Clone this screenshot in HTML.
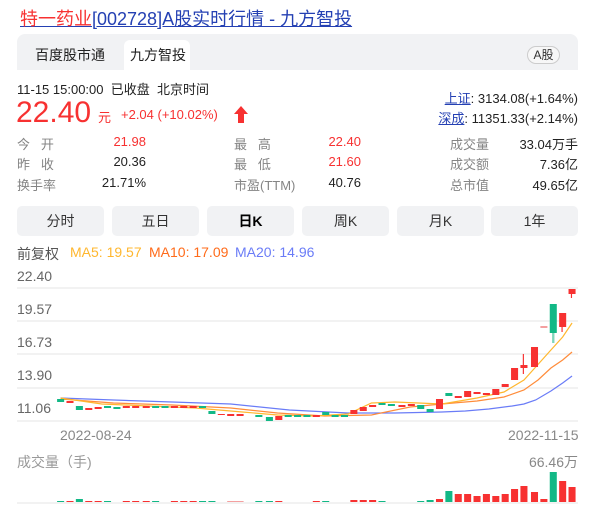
<!DOCTYPE html>
<html><head><meta charset="utf-8"><style>
*{margin:0;padding:0;box-sizing:border-box}
body{width:610px;height:512px;background:#fff;font-family:"Liberation Sans","Noto Sans CJK SC",sans-serif;position:relative;overflow:hidden;color:#333}
.a{position:absolute;white-space:nowrap}
.title{left:20px;top:5px;font-size:18px;color:#2440b3;text-decoration:underline}
.title span{color:#f73131}
.tabs{left:17px;top:34px;width:561px;height:36px;background:#f1f2f4;border-radius:8px 8px 0 0}
.tab{top:40px;height:30px;font-size:14px;line-height:30px;color:#222}
.btn{top:206px;height:30px;width:87px;background:#f1f2f4;border-radius:5px;font-size:14px;line-height:30px;text-align:center;color:#333}
.lbl{font-size:13px;color:#858585}
.val{font-size:13px;color:#222}
.red{color:#f73131}
.ax{font-size:13px;color:#666}
</style></head><body>
<div class="a title"><span>特一药业</span>[002728]A股实时行情 - 九方智投</div>
<div class="a tabs"></div>
<div class="a tab" style="left:35px">百度股市通</div>
<div class="a" style="left:124px;top:40px;width:66px;height:30px;background:#fff;border-radius:6px 6px 0 0"></div>
<div class="a tab" style="left:130px">九方智投</div>
<div class="a" style="left:527px;top:46px;width:33px;height:18px;border:1px solid #ccc;border-radius:9px;font-size:12px;line-height:16px;text-align:center;color:#333;background:#f7f7f7">A股</div>

<div class="a" style="left:17px;top:79px;font-size:13px;color:#222">11-15 15:00:00 &nbsp;已收盘 &nbsp;北京时间</div>
<div class="a red" style="left:16px;top:98px;font-size:30px;line-height:30px">22.40</div>
<div class="a red" style="left:98px;top:107px;font-size:13px">元</div>
<div class="a red" style="left:121px;top:107px;font-size:13px">+2.04 (+10.02%)</div>
<svg class="a" style="left:234px;top:106px" width="14" height="17" viewBox="0 0 14 17"><path d="M7 0L14 8H10V17H4V8H0Z" fill="#f73131"/></svg>
<div class="a" style="right:32px;top:88px;font-size:13px;color:#222"><u style="color:#2440b3">上证</u>: 3134.08(+1.64%)</div>
<div class="a" style="right:32px;top:108px;font-size:13px;color:#222"><u style="color:#2440b3">深成</u>: 11351.33(+2.14%)</div>

<div class="a lbl" style="left:17px;top:134px">今 &nbsp;&nbsp;开</div><div class="a val red" style="right:464px;top:134px">21.98</div>
<div class="a lbl" style="left:17px;top:154px">昨 &nbsp;&nbsp;收</div><div class="a val" style="right:464px;top:154px">20.36</div>
<div class="a lbl" style="left:17px;top:175px">换手率</div><div class="a val" style="right:464px;top:175px">21.71%</div>
<div class="a lbl" style="left:234px;top:134px">最 &nbsp;&nbsp;高</div><div class="a val red" style="right:249px;top:134px">22.40</div>
<div class="a lbl" style="left:234px;top:154px">最 &nbsp;&nbsp;低</div><div class="a val red" style="right:249px;top:154px">21.60</div>
<div class="a lbl" style="left:234px;top:175px">市盈(TTM)</div><div class="a val" style="right:249px;top:175px">40.76</div>
<div class="a lbl" style="left:450px;top:134px">成交量</div><div class="a val" style="right:32px;top:134px">33.04万手</div>
<div class="a lbl" style="left:450px;top:154px">成交额</div><div class="a val" style="right:32px;top:154px">7.36亿</div>
<div class="a lbl" style="left:450px;top:175px">总市值</div><div class="a val" style="right:32px;top:175px">49.65亿</div>

<div class="a btn" style="left:17px">分时</div>
<div class="a btn" style="left:112px">五日</div>
<div class="a btn" style="left:207px;color:#000;font-weight:bold">日K</div>
<div class="a btn" style="left:302px">周K</div>
<div class="a btn" style="left:397px">月K</div>
<div class="a btn" style="left:491px">1年</div>

<div class="a" style="left:17px;top:244px;font-size:14px;color:#555">前复权</div>
<div class="a" style="left:70px;top:244px;font-size:14px;color:#ffb72e">MA5: 19.57</div>
<div class="a" style="left:149px;top:244px;font-size:14px;color:#ff6b1a">MA10: 17.09</div>
<div class="a" style="left:235px;top:244px;font-size:14px;color:#6a7cf7">MA20: 14.96</div>

<div class="a ax" style="left:17px;top:268px;font-size:14px">22.40</div>
<div class="a ax" style="left:17px;top:301px;font-size:14px">19.57</div>
<div class="a ax" style="left:17px;top:334px;font-size:14px">16.73</div>
<div class="a ax" style="left:17px;top:367px;font-size:14px">13.90</div>
<div class="a ax" style="left:17px;top:400px;font-size:14px">11.06</div>
<div class="a ax" style="left:60px;top:427px;color:#888;font-size:14px">2022-08-24</div>
<div class="a ax" style="left:508px;top:427px;color:#888;font-size:14px">2022-11-15</div>
<div class="a ax" style="left:17px;top:452px;color:#999;font-size:14px">成交量（手)</div>
<div class="a ax" style="right:32px;top:452px;color:#888;font-size:14px">66.46万</div>

<svg class="a" style="left:0;top:0" width="610" height="512">
<g stroke="#eeeeee" stroke-width="1.5">
<line x1="17" x2="578" y1="288" y2="288"/><line x1="17" x2="578" y1="321" y2="321"/><line x1="17" x2="578" y1="354" y2="354"/><line x1="17" x2="578" y1="388" y2="388"/><line x1="17" x2="578" y1="421" y2="421"/><line x1="17" x2="578" y1="503" y2="503"/>
</g>
<g transform="translate(-3.9,0) scale(1.173,1)">
<polyline fill="none" stroke="#6a7cf7" stroke-width="1.2" vector-effect="non-scaling-stroke" points="55,398 100,400 150,402 200,404 250,410 300,413 340,413 380,412 400,411 420,409 440,406 450,404 460,400 473,391 483,383 491,376"/>
<polyline fill="none" stroke="#ff8c3a" stroke-width="1.2" vector-effect="non-scaling-stroke" points="55,399 100,403 150,405 200,408 240,413 280,416 320,415 353,407 380,404 410,401 433,397 450,390 462,380 473,368 483,360 491,352"/>
<polyline fill="none" stroke="#ffb72e" stroke-width="1.2" vector-effect="non-scaling-stroke" points="55,398 90,404 130,406 170,408 210,412 240,415 270,416 300,414 320,403 340,402 380,404 410,398 433,392 450,380 460,367 473,350 483,337 491,323"/>
<g fill="#f73131">
<rect x="60" y="401" width="6" height="2"/><rect x="76" y="408" width="6" height="2"/><rect x="84" y="407" width="6" height="2"/><rect x="108" y="406" width="6" height="2"/><rect x="116" y="406" width="6" height="2"/><rect x="125" y="406" width="6" height="2"/><rect x="149" y="406" width="6" height="2"/><rect x="157" y="406" width="6" height="2"/><rect x="165" y="406" width="6" height="2"/><rect x="189" y="414" width="6" height="1"/><rect x="197" y="414" width="6" height="2"/><rect x="205" y="414" width="6" height="2"/>
<rect x="238" y="416" width="6" height="4"/><rect x="270" y="415" width="6" height="2"/><rect x="302" y="410" width="6" height="4"/><rect x="310" y="407" width="6" height="4"/><rect x="318" y="405" width="6" height="2"/><rect x="343" y="405" width="6" height="2"/><rect x="351" y="404" width="6" height="2"/>
<rect x="375" y="399" width="6" height="10"/><rect x="391" y="396" width="6" height="2"/><rect x="399" y="391" width="6" height="6"/><rect x="407" y="392" width="6" height="2"/><rect x="415" y="393" width="6" height="2"/><rect x="423" y="389" width="6" height="6"/><rect x="431" y="384" width="6" height="3"/><rect x="439" y="368" width="6" height="12"/><rect x="447" y="365" width="6" height="3"/><rect x="456" y="347" width="6" height="20"/><rect x="480" y="313" width="6" height="14"/><rect x="488" y="289" width="6" height="5"/>
<rect x="464" y="326" width="6" height="2" fill="#f4a0a0"/>
<rect x="449" y="354" width="1" height="20"/><rect x="482" y="327" width="1" height="5"/><rect x="490" y="294" width="1" height="4"/>
</g>
<g fill="#12b886">
<rect x="52" y="399" width="6" height="3"/><rect x="68" y="406" width="6" height="4"/><rect x="92" y="406" width="6" height="2"/><rect x="100" y="407" width="6" height="2"/><rect x="133" y="406" width="6" height="2"/><rect x="141" y="406" width="6" height="2"/><rect x="173" y="406" width="6" height="2"/><rect x="181" y="411" width="6" height="3"/><rect x="221" y="415" width="6" height="2"/><rect x="230" y="417" width="6" height="4"/><rect x="246" y="415" width="6" height="2"/><rect x="254" y="415" width="6" height="2"/><rect x="262" y="415" width="6" height="2"/><rect x="278" y="412" width="6" height="3"/><rect x="286" y="415" width="6" height="2"/><rect x="294" y="415" width="6" height="2"/><rect x="326" y="403" width="6" height="2"/><rect x="334" y="404" width="6" height="2"/><rect x="359" y="405" width="6" height="4"/><rect x="367" y="409" width="6" height="3"/><rect x="383" y="393" width="6" height="3"/><rect x="472" y="304" width="6" height="29"/><rect x="474" y="333" width="2" height="10" fill="#7fd6bb"/>
</g>
<g fill="#f73131">
<rect x="60" y="501" width="6" height="1"/><rect x="76" y="501" width="6" height="1"/><rect x="84" y="501" width="6" height="1"/><rect x="108" y="501" width="6" height="1"/><rect x="116" y="501" width="6" height="1"/><rect x="125" y="501" width="6" height="1"/><rect x="149" y="501" width="6" height="1"/><rect x="157" y="501" width="6" height="1"/><rect x="165" y="501" width="6" height="1"/><rect x="238" y="501" width="6" height="1"/><rect x="270" y="501" width="6" height="1"/>
<rect x="302" y="500" width="6" height="2"/><rect x="310" y="500" width="6" height="2"/><rect x="318" y="500" width="6" height="2"/>
<rect x="375" y="499" width="6" height="3"/><rect x="391" y="494" width="6" height="8"/><rect x="399" y="494" width="6" height="8"/><rect x="407" y="496" width="6" height="6"/><rect x="415" y="494" width="6" height="8"/><rect x="423" y="496" width="6" height="6"/><rect x="431" y="494" width="6" height="8"/><rect x="439" y="489" width="6" height="13"/><rect x="447" y="486" width="6" height="16"/><rect x="456" y="492" width="6" height="10"/><rect x="464" y="499" width="6" height="3"/><rect x="480" y="481" width="6" height="21"/><rect x="488" y="487" width="6" height="15"/>
<rect x="197" y="501" width="14" height="1" fill="#f4a0a0"/>
</g>
<g fill="#12b886">
<rect x="52" y="501" width="6" height="1"/><rect x="68" y="499" width="6" height="3"/><rect x="92" y="501" width="6" height="1"/><rect x="133" y="501" width="6" height="1"/><rect x="173" y="501" width="6" height="1"/><rect x="181" y="501" width="6" height="1"/><rect x="221" y="501" width="6" height="1"/><rect x="230" y="501" width="6" height="1"/><rect x="278" y="501" width="6" height="1"/><rect x="326" y="501" width="6" height="1"/><rect x="359" y="501" width="6" height="1"/><rect x="367" y="500" width="6" height="2"/><rect x="383" y="491" width="6" height="11"/><rect x="472" y="472" width="6" height="30"/>
</g>
</g>
</svg>
</body></html>
